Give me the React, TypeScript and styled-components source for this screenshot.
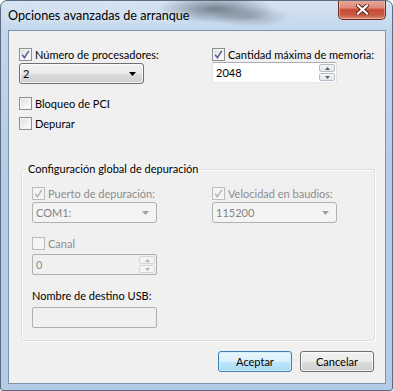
import React from 'react';
import styled, { createGlobalStyle } from 'styled-components';

const GlobalStyle = createGlobalStyle`
  html, body { margin: 0; padding: 0; background: #ffffff; }
  body {
    font-family: Lato, 'Segoe UI', sans-serif;
    font-size: 11px;
    color: #000;
  }
`;

const Window = styled.div`
  position: relative;
  width: 393px;
  height: 391px;
  box-sizing: border-box;
  border: 1px solid #5c6c80;
  border-radius: 7px 7px 3px 3px;
  padding: 0 6px 6px 7px;
  display: flex;
  flex-direction: column;
  background:
    radial-gradient(ellipse 60px 14px at 215px 8px, rgba(40, 50, 60, 0.55), rgba(40, 50, 60, 0) 100%),
    radial-gradient(ellipse 40px 10px at 250px 16px, rgba(70, 80, 90, 0.35), rgba(70, 80, 90, 0) 100%),
    linear-gradient(180deg, #d6e4f3 0%, #c2d6ec 8%, #b7cde6 40%, #b3cbe6 100%);
  overflow: hidden;
`;

const TitleBar = styled.div`
  height: 29px;
  display: flex;
  align-items: flex-start;
  flex-shrink: 0;
`;

const TitleText = styled.div`
  padding-top: 6px;
  font-size: 12.6px;
  line-height: 17px;
  color: #000;
  text-shadow: 0 0 8px rgba(255, 255, 255, 0.9);
`;

const CloseButton = styled.div`
  margin-left: auto;
  margin-top: -1px;
  width: 48px;
  height: 20px;
  box-sizing: border-box;
  border: 1px solid #6b2a1f;
  border-top: none;
  border-radius: 0 0 5px 5px;
  background: linear-gradient(180deg, #e9a99b 0%, #dd8a79 40%, #c74a33 52%, #c95a43 80%, #e08f76 100%);
  box-shadow: inset 0 0 0 1px rgba(255, 220, 210, 0.45);
  display: flex;
  align-items: center;
  justify-content: center;
`;

const Client = styled.div`
  flex: 1;
  box-sizing: border-box;
  border: 1px solid #7f93ab;
  background: #f0f0f0;
  padding: 16px 11px 0 10px;
  display: flex;
  flex-direction: column;
`;

const TwoCols = styled.div<{ $left: number }>`
  display: grid;
  grid-template-columns: ${p => p.$left}px 1fr;
`;

const Col = styled.div`
  display: flex;
  flex-direction: column;
`;

const CheckRow = styled.label<{ $top?: number; $disabled?: boolean }>`
  display: flex;
  align-items: center;
  gap: 3px;
  height: 15px;
  margin-top: ${p => p.$top ?? 0}px;
  line-height: 15px;
  color: ${p => (p.$disabled ? '#8d8d8d' : '#000')};
  white-space: nowrap;
`;

const Box = styled.span<{ $disabled?: boolean }>`
  width: 13px;
  height: 13px;
  box-sizing: border-box;
  flex-shrink: 0;
  border: 1px solid ${p => (p.$disabled ? '#bcbcbc' : '#8e8f8f')};
  background: ${p =>
    p.$disabled
      ? '#f4f4f4'
      : 'linear-gradient(135deg, #dcdcdc 0%, #f0f0f0 50%, #ffffff 100%)'};
  box-shadow: inset 0 0 0 1px #f4f4f4;
  display: flex;
  align-items: center;
  justify-content: center;
`;

const Select = styled.div<{ $width: number; $top?: number; $disabled?: boolean }>`
  width: ${p => p.$width}px;
  height: 21px;
  margin-top: ${p => p.$top ?? 0}px;
  box-sizing: border-box;
  border: 1px solid ${p => (p.$disabled ? '#adb2b5' : '#707070')};
  border-radius: 3px;
  background: ${p =>
    p.$disabled
      ? '#f4f4f4'
      : 'linear-gradient(180deg, #f2f2f2 0%, #ebebeb 50%, #dddddd 51%, #cfcfcf 100%)'};
  box-shadow: inset 0 0 0 1px ${p => (p.$disabled ? '#f4f4f4' : 'rgba(255,255,255,0.7)')};
  display: flex;
  align-items: center;
  padding: 0 7px 0 3px;
  color: ${p => (p.$disabled ? '#838383' : '#000')};
  line-height: 18px;
`;

const SelectValue = styled.span`
  flex: 1;
`;

const TextField = styled.div<{ $width: number; $top?: number; $disabled?: boolean }>`
  width: ${p => p.$width}px;
  height: 21px;
  margin-top: ${p => p.$top ?? 0}px;
  box-sizing: border-box;
  border: 1px solid ${p => (p.$disabled ? '#afafaf' : '#abadb3')};
  border-left-color: ${p => (p.$disabled ? '#afafaf' : '#e2e3ea')};
  border-right-color: ${p => (p.$disabled ? '#afafaf' : '#dbdfe6')};
  border-bottom-color: ${p => (p.$disabled ? '#afafaf' : '#e3e9ef')};
  border-radius: 2px;
  background: ${p => (p.$disabled ? '#f0f0f0' : '#ffffff')};
  color: ${p => (p.$disabled ? '#8d8d8d' : '#000')};
  display: flex;
  align-items: stretch;
`;

const FieldText = styled.span`
  flex: 1;
  padding-left: 3px;
  line-height: 19px;
`;

const Spin = styled.div`
  width: 16px;
  display: flex;
  flex-direction: column;
  gap: 1px;
  padding: 1px 1px 1px 0;
`;

const SpinBtn = styled.div<{ $disabled?: boolean }>`
  flex: 1;
  border: 1px solid ${p => (p.$disabled ? '#d6d6d6' : '#b7bcc4')};
  border-radius: 2px;
  background: ${p =>
    p.$disabled ? '#f4f4f4' : 'linear-gradient(180deg, #f6f6f6 0%, #e6e6e6 100%)'};
  display: flex;
  align-items: center;
  justify-content: center;
`;

const Group = styled.fieldset`
  margin: 30px 0 0 2px;
  width: 354px;
  box-sizing: border-box;
  border: 1px solid #d5dfe5;
  border-radius: 3px;
  padding: 9px 10px 12px 10px;
  box-shadow: 1px 1px 0 #ffffff inset, 1px 1px 0 #ffffff;
`;

const Legend = styled.legend`
  padding: 0 2px;
  margin-left: -6px;
  line-height: 16px;
  color: #000;
`;

const PlainLabel = styled.div<{ $top?: number }>`
  margin-top: ${p => p.$top ?? 0}px;
  line-height: 16px;
`;

const Footer = styled.div`
  display: flex;
  justify-content: flex-end;
  gap: 8px;
  margin-top: 10px;
`;

const Button = styled.div<{ $default?: boolean }>`
  width: 74px;
  height: 21px;
  box-sizing: border-box;
  border: 1px solid ${p => (p.$default ? '#3c7fb1' : '#707070')};
  border-radius: 3px;
  background: ${p =>
    p.$default
      ? 'linear-gradient(180deg, #eaf6fd 0%, #d9f0fc 50%, #bee6fd 51%, #a7d9f5 100%)'
      : 'linear-gradient(180deg, #f2f2f2 0%, #ebebeb 50%, #dddddd 51%, #cfcfcf 100%)'};
  box-shadow: inset 0 0 0 1px ${p => (p.$default ? 'rgba(210,240,255,0.9)' : 'rgba(255,255,255,0.7)')};
  display: flex;
  align-items: center;
  justify-content: center;
  line-height: 18px;
`;

const Check = ({ disabled }: { disabled?: boolean }) => (
  <svg width="9" height="9" viewBox="0 0 9 9">
    <path
      d="M1.2 4.8 L3.4 7.6 L7.8 0.8"
      fill="none"
      stroke={disabled ? '#b4b4b4' : '#4a5f97'}
      strokeWidth="1.5"
    />
  </svg>
);

const CheckBox = ({ checked, disabled }: { checked?: boolean; disabled?: boolean }) => (
  <Box $disabled={disabled}>{checked && <Check disabled={disabled} />}</Box>
);

const Arrow = ({ disabled }: { disabled?: boolean }) => (
  <svg width="7" height="4" viewBox="0 0 7 4">
    <path d="M0 0 H7 L3.5 4 Z" fill={disabled ? '#a0a0a0' : '#000'} />
  </svg>
);

const SmallArrow = ({ up, disabled }: { up?: boolean; disabled?: boolean }) => (
  <svg width="5" height="3" viewBox="0 0 5 3">
    <path d={up ? 'M0 3 H5 L2.5 0 Z' : 'M0 0 H5 L2.5 3 Z'} fill={disabled ? '#b0b0b0' : '#4d6185'} />
  </svg>
);

const SpinBox = ({ disabled }: { disabled?: boolean }) => (
  <Spin>
    <SpinBtn $disabled={disabled}><SmallArrow up disabled={disabled} /></SpinBtn>
    <SpinBtn $disabled={disabled}><SmallArrow disabled={disabled} /></SpinBtn>
  </Spin>
);

export default function App() {
  return (
    <>
      <GlobalStyle />
      <Window>
        <TitleBar>
          <TitleText>Opciones avanzadas de arranque</TitleText>
          <CloseButton>
            <svg width="13" height="11" viewBox="0 0 13 11">
              <path d="M2 1.5 L11 9.5 M11 1.5 L2 9.5" stroke="#5a2016" strokeWidth="4" strokeLinecap="square" />
              <path d="M2 1.5 L11 9.5 M11 1.5 L2 9.5" stroke="#ffffff" strokeWidth="2.2" strokeLinecap="square" />
            </svg>
          </CloseButton>
        </TitleBar>
        <Client>
          <TwoCols $left={193}>
            <Col>
              <CheckRow>
                <CheckBox checked />
                Número de procesadores:
              </CheckRow>
              <Select $width={125} $top={1}>
                <SelectValue>2</SelectValue>
                <Arrow />
              </Select>
              <CheckRow $top={12}>
                <CheckBox />
                Bloqueo de PCI
              </CheckRow>
              <CheckRow $top={5}>
                <CheckBox />
                Depurar
              </CheckRow>
            </Col>
            <Col>
              <CheckRow>
                <CheckBox checked />
                Cantidad máxima de memoria:
              </CheckRow>
              <TextField $width={125} $top={0}>
                <FieldText>2048</FieldText>
                <SpinBox />
              </TextField>
            </Col>
          </TwoCols>

          <Group>
            <Legend>Configuración global de depuración</Legend>
            <TwoCols $left={180}>
              <Col>
                <CheckRow $disabled>
                  <CheckBox checked disabled />
                  Puerto de depuración:
                </CheckRow>
                <Select $width={125} $top={1} $disabled>
                  <SelectValue>COM1:</SelectValue>
                  <Arrow disabled />
                </Select>
                <CheckRow $top={13} $disabled>
                  <CheckBox disabled />
                  Canal
                </CheckRow>
                <TextField $width={125} $top={3} $disabled>
                  <FieldText>0</FieldText>
                  <SpinBox disabled />
                </TextField>
                <PlainLabel $top={13}>Nombre de destino USB:</PlainLabel>
                <TextField $width={125} $top={3} $disabled />
              </Col>
              <Col>
                <CheckRow $disabled>
                  <CheckBox checked disabled />
                  Velocidad en baudios:
                </CheckRow>
                <Select $width={125} $top={1} $disabled>
                  <SelectValue>115200</SelectValue>
                  <Arrow disabled />
                </Select>
              </Col>
            </TwoCols>
          </Group>

          <Footer>
            <Button $default>Aceptar</Button>
            <Button>Cancelar</Button>
          </Footer>
        </Client>
      </Window>
    </>
  );
}
